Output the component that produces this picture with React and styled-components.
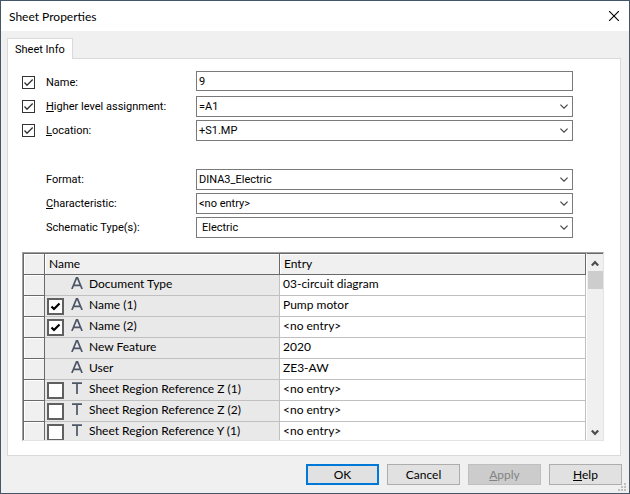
import React, { useState } from 'react';
import styled, { createGlobalStyle } from 'styled-components';

const GlobalStyle = createGlobalStyle`
  * {
    box-sizing: border-box;
  }
  body {
    margin: 0;
    color: #000;
    font-family: Lato, 'Open Sans', sans-serif;
    font-size: 12px;
  }
  input, select, button {
    margin: 0;
    color: inherit;
    font: inherit;
  }
`
const Dialog = styled.main`
  position: relative;
  display: flex;
  flex-direction: column;
  height: 100vh;
  background: #f0f0f0;
  border: 1px solid #43566a;
`
const TitleBar = styled.header`
  display: flex;
  align-items: center;
  justify-content: space-between;
  height: 30px;
  padding: 0 8px;
  background: #fff;
`
const Title = styled.h1`
  margin: 0;
  font-size: 12px;
  font-weight: normal;
`
const CloseButton = styled.button`
  display: flex;
  padding: 2px;
  background: none;
  border: 0;
`
const TabList = styled.div`
  display: flex;
  padding: 7px 6px 0;
`
const Tab = styled.button`
  height: 21px;
  margin-bottom: -1px;
  padding: 0 7px;
  background: #fff;
  border: 1px solid #d9d9d9;
  border-bottom: 0;
  font-family: Roboto, 'Liberation Sans', sans-serif;
  font-size: 11px;
  z-index: 1;
`
const Panel = styled.section`
  display: flex;
  flex: 1;
  flex-direction: column;
  min-height: 0;
  margin: 0 8px 0 6px;
  padding: 12px 16px 14px 14px;
  background: #fff;
  border: 1px solid #d9d9d9;
`
const Fields = styled.div`
  display: flex;
  flex-direction: column;
  gap: 3px;
  margin: 0 31px ${props => props.$gap}px 0;
  font-family: Roboto, 'Liberation Sans', sans-serif;
  font-size: 11px;
`
const FieldRow = styled.div`
  display: grid;
  grid-template-columns: 24px 150px 1fr;
  align-items: center;
`
const FieldLabel = styled.label`
  grid-column: 2;
`
const TextBox = styled.input`
  width: 100%;
  height: 20px;
  margin-bottom: 2px;
  padding: 0 2px;
  background: #fff;
  border: 1px solid #7a7a7a;
`
const SelectWrap = styled.div`
  display: grid;
  grid-template-columns: 1fr 13px;
  align-items: center;

  svg {
    grid-area: 1 / 2;
    pointer-events: none;
  }
`
const SelectBox = styled.select`
  grid-area: 1 / 1 / 2 / 3;
  height: 21px;
  padding: 0 16px 0 ${props => props.$indent ? 5 : 2}px;
  appearance: none;
  background: #fff;
  border: 1px solid #7a7a7a;
  border-radius: 0;
`
const CheckWrap = styled.span`
  display: inline-grid;
  width: ${props => props.$size}px;
  height: ${props => props.$size}px;

  > * {
    grid-area: 1 / 1;
  }
  svg {
    pointer-events: none;
  }
`
const CheckInput = styled.input`
  width: 100%;
  height: 100%;
  appearance: none;
  background: #fff;
  border: ${props => props.$heavy ? '2px solid #606060' : '1px solid #333'};
`
const GridFrame = styled.div`
  display: flex;
  flex: 1;
  min-height: 0;
  overflow: hidden;
  border: 1px solid #a0a0a0;
  border-right-color: #e3e3e3;
  border-bottom-color: #e3e3e3;
`
const GridView = styled.div`
  flex: 1;
  overflow: hidden;
  border-top: 1px solid #696969;
  border-left: 1px solid #696969;
`
const Grid = styled.table`
  width: 100%;
  table-layout: fixed;
  border-spacing: 0;
  line-height: 16px;
`
const HeadCell = styled.th`
  width: ${props => props.$width};
  height: 21px;
  padding: 0 4px 1px;
  background: #f0f0f0;
  border: solid #696969;
  border-width: 0 1px 1px 0;
  box-shadow: inset 1px 1px #fff;
  font-weight: normal;
  text-align: left;
`
const RowHead = styled.td`
  padding: 0;
  background: #f0f0f0;
  border: solid #696969;
  border-width: 0 1px 1px 0;
  box-shadow: inset 1px 1px #fff;
`
const Cell = styled.td`
  height: 21px;
  padding: 1px 3px 0;
  background: ${props => props.$shaded ? '#e9e9e9' : '#fff'};
  border: solid #c0c0c0;
  border-width: 0 1px 1px 0;
  vertical-align: top;
`
const Feature = styled.div`
  display: grid;
  grid-template-columns: 24px 18px 1fr;
  align-items: start;
  height: 19px;
  margin-left: -1px;

  > * {
    margin-top: 1px;
  }
  > label {
    margin-top: 0;
  }
`
const ScrollBar = styled.div`
  display: flex;
  flex-direction: column;
  align-items: center;
  width: 17px;
  background: #f0f0f0;
  border-top: 1px solid #696969;
  border-left: 1px solid #fff;
`
const ScrollButton = styled.button`
  display: flex;
  align-items: center;
  justify-content: center;
  height: 17px;
  padding: 2px 0 0;
  background: none;
  border: 0;
`
const Thumb = styled.div`
  width: 15px;
  height: 18px;
  margin-bottom: auto;
  background: #cdcdcd;
`
const Footer = styled.footer`
  display: flex;
  justify-content: flex-end;
  gap: 8px;
  padding: 8px 7px 8px;
`
const Button = styled.button`
  width: 73px;
  height: 21px;
  padding: 0;
  background: #e1e1e1;
  border: ${props => props.$primary ? '2px solid #0078d7' : '1px solid #adadad'};

  &:disabled {
    color: #838383;
    background: #ccc;
    border-color: #bfbfbf;
  }
`
const Grip = styled.svg`
  position: absolute;
  right: 3px;
  bottom: 2px;
`

const assignments = [
  { id: 'name', label: 'Name:', value: '9', checked: true, text: true },
  { id: 'level', label: <><u>H</u>igher level assignment:</>, value: '=A1', checked: true },
  { id: 'location', label: <><u>L</u>ocation:</>, value: '+S1.MP', checked: true },
];

const settings = [
  { id: 'format', label: 'Format:', value: 'DINA3_Electric' },
  { id: 'characteristic', label: <><u>C</u>haracteristic:</>, value: '<no entry>' },
  { id: 'schematic', label: 'Schematic Type(s):', value: 'Electric', indent: true },
];

const features = [
  { icon: 'A', name: 'Document Type', entry: '03-circuit diagram' },
  { icon: 'A', name: 'Name (1)', entry: 'Pump motor', checked: true },
  { icon: 'A', name: 'Name (2)', entry: '<no entry>', checked: true },
  { icon: 'A', name: 'New Feature', entry: '2020' },
  { icon: 'A', name: 'User', entry: 'ZE3-AW' },
  { icon: 'T', name: 'Sheet Region Reference Z (1)', entry: '<no entry>', checked: false },
  { icon: 'T', name: 'Sheet Region Reference Z (2)', entry: '<no entry>', checked: false },
  { icon: 'T', name: 'Sheet Region Reference Y (1)', entry: '<no entry>', checked: false },
];

function CheckBox({ id, label, heavy, defaultChecked }) {
  const [checked, setChecked] = useState(defaultChecked);
  const size = heavy ? 17 : 13;

  return (
    <CheckWrap $size={size}>
      <CheckInput
        type="checkbox"
        id={id}
        aria-label={label}
        $heavy={heavy}
        checked={checked}
        onChange={e => setChecked(e.target.checked)}
      />
      {checked && (
        <svg width={size} height={size} fill="none">
          {heavy
            ? <path d="M4.5 8.5 7 11 12.5 5.5" stroke="#000" strokeWidth="2.2" />
            : <path d="M2.5 6.5 5 9.2 10.7 3.5" stroke="#333" strokeWidth="1.3" />}
        </svg>
      )}
    </CheckWrap>
  );
}

function Field({ field }) {
  return (
    <FieldRow>
      {field.checked && <CheckBox label={'Use ' + field.id} defaultChecked />}
      <FieldLabel htmlFor={field.id}>{field.label}</FieldLabel>
      {field.text ? (
        <TextBox id={field.id} defaultValue={field.value} />
      ) : (
        <SelectWrap>
          <SelectBox id={field.id} $indent={field.indent}>
            <option>{field.value}</option>
          </SelectBox>
          <svg width="8" height="5" fill="none">
            <path d="M0.4 0.6 4 4.1 7.6 0.6" stroke="#444" strokeWidth="1.2" />
          </svg>
        </SelectWrap>
      )}
    </FieldRow>
  );
}

function FeatureIcon({ kind }) {
  return (
    <svg width="12" height="12" fill="none" stroke="#4d5666" strokeWidth="1.7">
      {kind === 'A'
        ? <path d="M0.9 12 5.5 0.9H6.5L11.1 12M2.6 8.3H9.4" />
        : <path d="M1 1.2H11M6 1.2V12" />}
    </svg>
  );
}

export default function App() {
  return (
    <>
      <GlobalStyle />
      <Dialog>
        <TitleBar>
          <Title>Sheet Properties</Title>
          <CloseButton aria-label="Close">
            <svg width="10" height="10" stroke="#000" strokeWidth="1.1">
              <path d="M0 0 10 10M10 0 0 10" />
            </svg>
          </CloseButton>
        </TitleBar>
        <TabList role="tablist">
          <Tab role="tab" aria-selected="true">Sheet Info</Tab>
        </TabList>
        <Panel>
          <Fields $gap={28}>
            {assignments.map(field => <Field key={field.id} field={field} />)}
          </Fields>
          <Fields $gap={14}>
            {settings.map(field => <Field key={field.id} field={field} />)}
          </Fields>
          <GridFrame>
            <GridView>
              <Grid>
                <thead>
                  <tr>
                    <HeadCell $width="21px" />
                    <HeadCell $width="235px">Name</HeadCell>
                    <HeadCell>Entry</HeadCell>
                  </tr>
                </thead>
                <tbody>
                  {features.map((feature, i) => (
                    <tr key={feature.name}>
                      <RowHead />
                      <Cell $shaded>
                        <Feature>
                          {feature.checked === undefined
                            ? <span />
                            : <CheckBox id={'feature' + i} heavy defaultChecked={feature.checked} />}
                          <FeatureIcon kind={feature.icon} />
                          <label htmlFor={'feature' + i}>{feature.name}</label>
                        </Feature>
                      </Cell>
                      <Cell>{feature.entry}</Cell>
                    </tr>
                  ))}
                </tbody>
              </Grid>
            </GridView>
            <ScrollBar>
              <ScrollButton aria-label="Scroll up">
                <svg width="8" height="7" fill="none">
                  <path d="M0.8 5.5 4 2.2 7.2 5.5" stroke="#505050" strokeWidth="2.2" />
                </svg>
              </ScrollButton>
              <Thumb />
              <ScrollButton aria-label="Scroll down">
                <svg width="8" height="7" fill="none">
                  <path d="M0.8 1.5 4 4.8 7.2 1.5" stroke="#505050" strokeWidth="2.2" />
                </svg>
              </ScrollButton>
            </ScrollBar>
          </GridFrame>
        </Panel>
        <Footer>
          <Button $primary>OK</Button>
          <Button>Cancel</Button>
          <Button disabled><u>A</u>pply</Button>
          <Button><u>H</u>elp</Button>
        </Footer>
        <Grip width="8" height="8" fill="#bfbfbf">
          <path d="M6 0h2v2h-2zM3 3h2v2h-2zM6 3h2v2h-2zM0 6h2v2h-2zM3 6h2v2h-2zM6 6h2v2h-2z" />
        </Grip>
      </Dialog>
    </>
  );
}
